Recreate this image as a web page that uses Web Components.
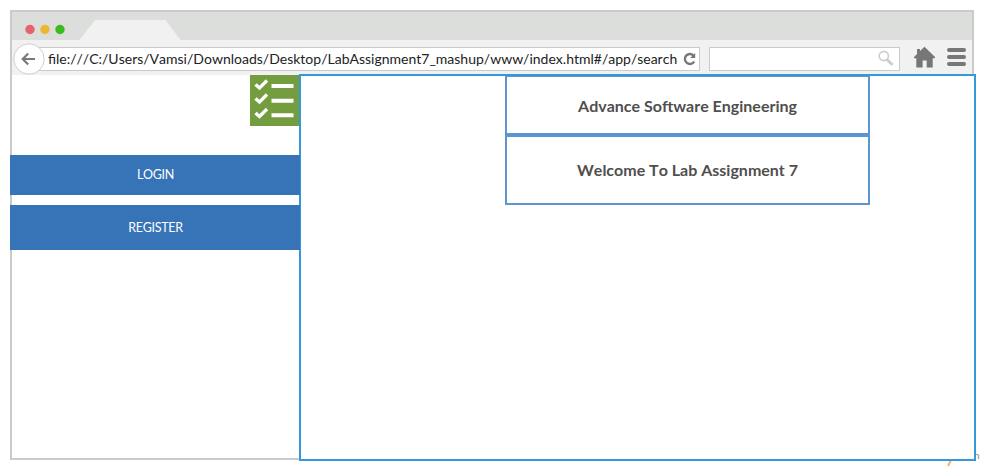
<!DOCTYPE html>
<html lang="en">
<head>
<meta charset="utf-8">
<title>Lab Assignment 7</title>
<style>
html,body{margin:0;background:#fff;overflow:hidden}
body{font-family:Lato,"Liberation Sans",sans-serif;font-kerning:none;width:985px;height:470px}
</style>
</head>
<body>
<browser-window>
  <tab-strip slot="tabs"></tab-strip>
  <tool-bar slot="bar">file:///C:/Users/Vamsi/Downloads/Desktop/LabAssignment7_mashup/www/index.html#/app/search</tool-bar>
  <side-nav>
    <nav-button style="--h:40px;--lift:2px">LOGIN</nav-button>
    <nav-button style="--h:45px;--lift:1px">REGISTER</nav-button>
  </side-nav>
  <main-panel>
    <title-card style="--h:59px;--top:1px;--pad:1px">Advance Software Engineering</title-card>
    <title-card style="--h:70px;--top:2px;--lift:2px">Welcome To Lab Assignment 7</title-card>
  </main-panel>
</browser-window>
<corner-mark>n</corner-mark>
<script>
const define = (name, html) => customElements.define(name, class extends HTMLElement {
  constructor() {
    super();
    this.attachShadow({mode: 'open'}).innerHTML = html;
  }
});

define('browser-window', `
<style>
:host{display:flex;flex-direction:column;box-sizing:border-box;width:964px;height:450px;margin:10px;border:2px solid #c9cbc9;border-color:#c9cbc9 #cacaca #cacaca;position:relative;z-index:1;background:#fff}
.content{flex:1;display:flex;min-height:0}
</style>
<slot name="tabs"></slot><slot name="bar"></slot>
<div class="content"><slot></slot></div>`);

define('tab-strip', `
<style>
:host{display:block;height:28px;background:#dcdedb}
svg{display:block}
</style>
<svg width="960" height="28">
  <circle cx="18" cy="17.5" r="4.7" fill="#e9616f"/>
  <circle cx="33" cy="17.5" r="4.7" fill="#ecb731"/>
  <circle cx="48" cy="17.5" r="4.7" fill="#3cbb1f"/>
  <path d="M67 28.500L83 8H153.500L169 28.500Z" fill="#f1f1f1"/>
</svg>`);

define('tool-bar', `
<style>
:host{display:flex;box-sizing:border-box;height:35px;background:#f1f1f1;padding:3px 5px 0 1px;align-items:flex-start}
svg{display:block;flex:none}
.back{position:relative;z-index:1}
.url,.search{box-sizing:border-box;height:24px;margin-top:4px;border:1px solid #c9cbcb;background:#fff;display:flex;align-items:center}
.url{width:671px;margin-left:-16px;padding-left:18px;font-size:14px;color:#222;white-space:nowrap;justify-content:space-between}
.url span{padding-bottom:2px}
.search{width:191px;margin-left:9px;justify-content:flex-end}
.home{margin:3px 0 0 14px}
.menu{margin:5px 0 0 10px}
</style>
<svg class="back" width="32" height="32"><circle cx="16" cy="16" r="15.200" fill="#fff" stroke="#cfcfcf"/><path d="M22 16H10M15.200 10.500L9.700 16L15.200 21.500" fill="none" stroke="#7a7a7a" stroke-width="2.200"/></svg>
<div class="url"><span><slot></slot></span>
<svg width="17" height="18"><path d="M11.300 5.300A5 5 0 1 0 12.200 11.500" fill="none" stroke="#777" stroke-width="2.400"/><path d="M13.200 3V8H8.200Z" fill="#777"/></svg></div>
<div class="search"><svg width="21" height="20"><circle cx="5.800" cy="7" r="4.600" fill="none" stroke="#ccc" stroke-width="1.600"/><path d="M9 10.500L14.500 16" stroke="#ccc" stroke-width="2.800"/></svg></div>
<svg class="home" width="22" height="22"><path d="M10.500 .700L21 11V12.200H18.700V21.500H12.700V14.500H8.600V21.500H2.300V12.200H0V11L3 8V3H6V5Z" fill="#777"/></svg>
<svg class="menu" width="20" height="20"><path d="M3 2H18M3 9H18M3 16H18" stroke="#777" stroke-width="4" stroke-linecap="round"/></svg>`);

define('side-nav', `
<style>
:host{display:flex;flex-direction:column;flex:none;width:287px;position:relative;z-index:1}
svg{display:block;align-self:flex-end;margin-bottom:29px}
.list{display:flex;flex-direction:column;gap:10px;margin:0 -1px 0 -2px}
</style>
<svg width="49" height="51"><path fill="#749d3f" d="M0 0H49V51H0Z"/>
<g fill="none" stroke="#fff"><path stroke-width="3.300" d="M5.500 9.500L9.500 13L17 5.500M5.500 23.500L9.500 27L17 19.500M5.500 38L9.500 41.500L17 34"/><path stroke-width="4" d="M21.500 11H43.500M21.500 25.700H43.500M21.500 40.200H43.500"/></g></svg>
<div class="list"><slot></slot></div>`);

define('nav-button', `
<style>
:host{display:flex;align-items:center;justify-content:center;box-sizing:border-box;height:var(--h);background:#3673b7;color:#fff;font-size:12.500px;letter-spacing:-.3px;padding:0 0 var(--lift) 1px}
</style><slot></slot>`);

define('main-panel', `
<style>
:host{display:flex;flex-direction:column;align-items:center;box-sizing:border-box;flex:1;margin:-1px -4px -3px 0;border:2px solid #3498db;background:#fff;padding-left:100px}
</style><slot></slot>`);

define('title-card', `
<style>
:host{display:flex;align-items:center;justify-content:center;box-sizing:border-box;width:365px;height:var(--h);border:2px solid #5b96cf;border-top-width:var(--top);padding:var(--pad,0) 0 var(--lift,0);font-size:16px;font-weight:700;color:#4f4f4f}
</style><slot></slot>`);

define('corner-mark', `
<style>
:host{position:absolute;left:974px;top:449px;font-size:10px;line-height:12px;color:#888}
svg{position:absolute;left:-28px;top:11px}
</style><slot></slot>
<svg width="8" height="8"><path d="M2 6L5 0" stroke="#f6b26b" stroke-width="2"/></svg>`);
</script>
</body>
</html>
